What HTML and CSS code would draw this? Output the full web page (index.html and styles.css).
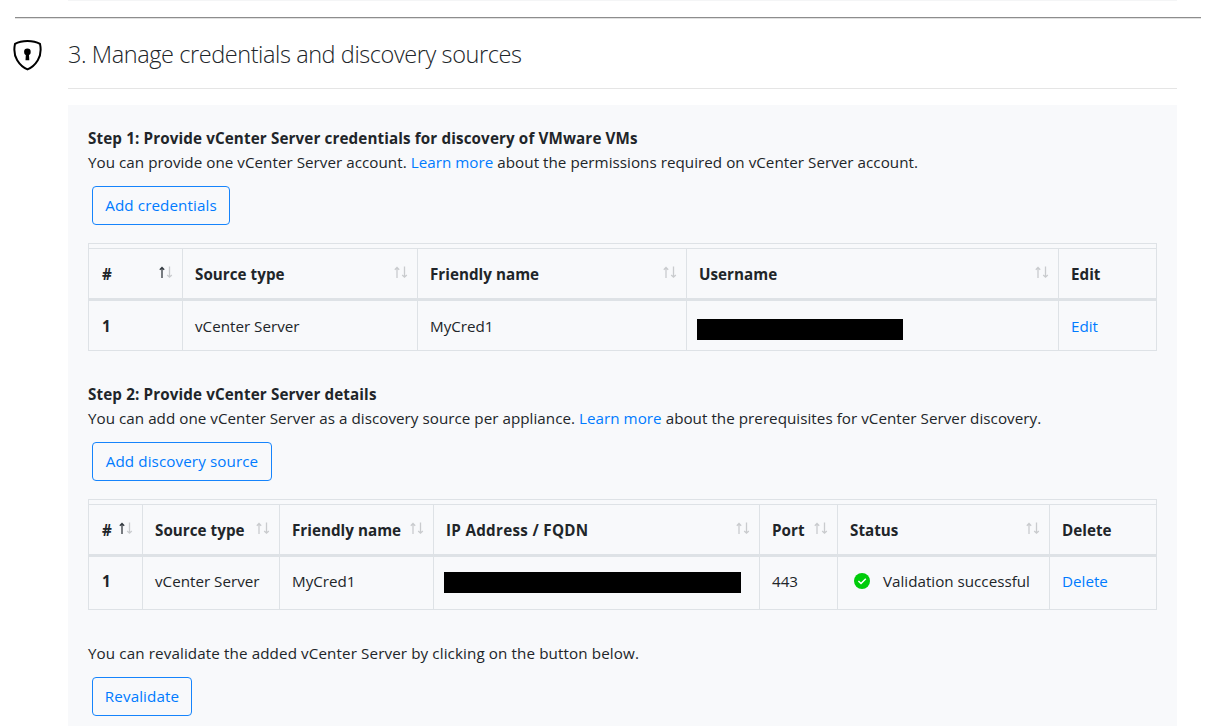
FILE: index.html
```
<!DOCTYPE html>
<html lang="en">
<head>
<meta charset="utf-8">
<title>Manage credentials and discovery sources</title>
<link rel="stylesheet" href="styles.css">
</head>
<body>
<svg class="defs" width="0" height="0">
  <symbol id="sort" viewBox="0 0 15 13">
    <path class="up" d="M4 12V1.5M1.8 3.8L4 1.5L6.2 3.8"/>
    <path class="down" d="M11.5 .5V11M9.2 9.1L11.5 11.2L13.8 9.1"/>
  </symbol>
</svg>
<div class="previous"></div>
<main class="section">
  <svg class="shield" viewBox="0 0 30 32" width="30" height="32">
    <path d="M14.5 1.9C9.8 1.9 5.2 3 2 4.9C.8 10.5 1.4 16.6 4.2 21.2C6.9 25.6 10.6 28.8 14.5 30.4C18.4 28.8 22.1 25.6 24.8 21.2C27.6 16.6 28.2 10.5 27 4.9C23.8 3 19.2 1.9 14.5 1.9Z" fill="none" stroke="#000" stroke-width="2" stroke-linejoin="round"/>
    <circle cx="14.4" cy="12.9" r="3.3"/><path d="M12.9 14h3l.4 7.2h-3.8z"/>
  </svg>
  <div class="content">
    <h1>3. Manage credentials and discovery sources</h1>
    <div class="panel">
      <h2>Step 1: Provide vCenter Server credentials for discovery of VMware VMs</h2>
      <p>You can provide one vCenter Server account. <a>Learn more</a> about the permissions required on vCenter Server account.</p>
      <button class="add-cred">Add credentials</button>
      <div class="table cred">
        <div class="cap"></div>
        <div class="row head">
          <div>#<svg class="sort asc"><use href="#sort"/></svg></div>
          <div>Source type<svg class="sort"><use href="#sort"/></svg></div>
          <div>Friendly name<svg class="sort"><use href="#sort"/></svg></div>
          <div>Username<svg class="sort"><use href="#sort"/></svg></div>
          <div>Edit</div>
        </div>
        <div class="row">
          <div><b>1</b></div><div>vCenter Server</div><div>MyCred1</div><div><span class="redacted user"></span></div><div><a>Edit</a></div>
        </div>
      </div>
      <h2>Step 2: Provide vCenter Server details</h2>
      <p>You can add one vCenter Server as a discovery source per appliance. <a>Learn more</a> about the prerequisites for vCenter Server discovery.</p>
      <button class="add-source">Add discovery source</button>
      <div class="table source">
        <div class="cap"></div>
        <div class="row head">
          <div>#<svg class="sort asc"><use href="#sort"/></svg></div>
          <div>Source type<svg class="sort"><use href="#sort"/></svg></div>
          <div>Friendly name<svg class="sort"><use href="#sort"/></svg></div>
          <div class="address">IP Address / FQDN<svg class="sort"><use href="#sort"/></svg></div>
          <div>Port<svg class="sort"><use href="#sort"/></svg></div>
          <div>Status<svg class="sort"><use href="#sort"/></svg></div>
          <div>Delete</div>
        </div>
        <div class="row">
          <div><b>1</b></div><div>vCenter Server</div><div>MyCred1</div><div><span class="redacted ip"></span></div><div>443</div>
          <div><svg class="check" viewBox="0 0 16 16"><circle cx="8" cy="8" r="8" fill="#00cc0a"/><path d="M4.4 8L7 10.5L11.8 5.7" fill="none" stroke="#fff" stroke-width="1.5"/></svg>Validation successful</div>
          <div><a>Delete</a></div>
        </div>
      </div>
      <p class="note">You can revalidate the added vCenter Server by clicking on the button below.</p>
      <button class="revalidate">Revalidate</button>
    </div>
  </div>
</main>
</body>
</html>
```
FILE: styles.css
```
* { box-sizing: border-box; }
body { margin: 0; height: 726px; overflow: hidden; background: #fff; color: #212529; font: 15.2px/24px "Open Sans", "Noto Sans", sans-serif; white-space: nowrap; }
.defs { display: block; }
.previous { height: 1px; margin: 0 39px 0 68px; background: #f4f5f6; }
.section { display: flex; margin: 16px 15px 0; border-top: 1px solid #8d8d8d; box-shadow: inset 0 1px #e1e1e1; }
.shield { margin: 21px 0 0 -2px; flex: none; }
.content { width: 1109px; margin-left: 25px; flex: none; }
h1 { height: 71px; margin: 0; padding-top: 20px; border-bottom: 1px solid #e5e5e5; font-size: 23.5px; font-weight: 300; line-height: 32px; letter-spacing: -.42px; color: #212529; }
.panel { height: 640px; margin-top: 16px; padding: 21px 20px; background: #f8f9fb; }
h2, p { margin: 0; font-size: 15.2px; line-height: 24px; height: 24px; }
h2 { font-weight: 700; letter-spacing: .13px; }
p { letter-spacing: .035px; }
.note { letter-spacing: .11px; }
a, button { color: #007bff; }
button { display: block; height: 39px; margin: 12px 0 0 4px; padding: 0 0 1px; border: 1px solid #1684fc; border-radius: 4px; background: transparent; font: 15.2px/24px "Open Sans", "Noto Sans", sans-serif; letter-spacing: .1px; }
.add-cred { width: 138px; }
.add-source { width: 180px; }
.revalidate { width: 100px; }
.table { width: 1069px; margin: 18px 0 31px; border: 1px solid #dee2e6; }
.cap { height: 4px; }
.row { display: grid; height: 49px; }
.cred .row { grid-template-columns: 93px 235px 269px 372px 98px; }
.source .row { grid-template-columns: 53px 137px 154px 326px 78px 212px 107px; }
.source .row:last-child { height: 52px; }
.row > div { display: flex; align-items: flex-start; padding: 13px 12px 0; border-left: 1px solid #dee2e6; }
.source .row:last-child > div { padding-top: 12px; }
.row > div:first-child { border-left: 0; padding-left: 13px; }
.row.head { height: 53px; border-top: 1px solid #dee2e6; border-bottom: 3px solid #dee2e6; font-weight: 700; letter-spacing: .03px; }
.row .address { letter-spacing: .3px; }
.sort { width: 15px; height: 13px; margin: 4px -3px 0 auto; flex: none; overflow: visible; fill: none; stroke: #c9cbce; stroke-width: 1.3; }
.asc { --up: #343a40; }
.up { stroke: var(--up, #c9cbce); }
.redacted { height: 21px; margin: 5px 0 0 -2px; background: #000; }
.user { width: 206px; }
.ip { width: 297px; margin-top: 3px; }
.check { width: 16px; height: 16px; margin: 4px 13px 0 4px; flex: none; }
```
